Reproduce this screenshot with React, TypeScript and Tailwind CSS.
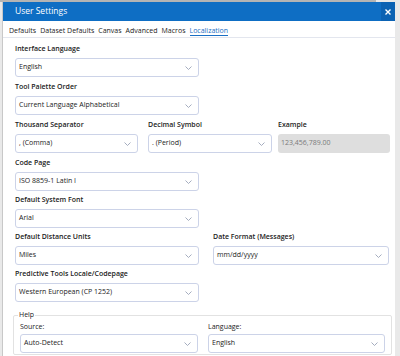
import React from "react";

const font = { fontFamily: '"Open Sans", "Noto Sans", Arial, sans-serif' };

const Chevron = () => (
	<svg width="7" height="4" viewBox="0 0 7 4" className="shrink-0">
		<path d="M0.5 0.5 L3.5 3.5 L6.5 0.5" fill="none" stroke="#9ba4b8" strokeWidth="0.9" />
	</svg>
);

const Select = ({ value, className = "" }: { value: string; className?: string }) => (
	<div
		className={`h-[19px] flex items-center justify-between pl-[3px] pr-[6px] border border-[#ccd3e8] rounded-[3px] bg-white text-[7px] text-[#1a1a1a] ${className}`}
	>
		<span>{value}</span>
		<Chevron />
	</div>
);

const Label = ({ text, className = "" }: { text: string; className?: string }) => (
	<div className={`h-[12px] leading-[12px] text-[7px] font-semibold text-[#222] mb-[3px] ${className}`}>{text}</div>
);

const tabs = ["Defaults", "Dataset Defaults", "Canvas", "Advanced", "Macros", "Localization"];

const App = () => {
	return (
		<div className="w-[400px] h-[356px] overflow-hidden bg-[#e9e9e9] flex flex-col" style={font}>
			<div className="h-[2px] shrink-0 bg-[#b4b4b4] mr-[24px]" />
			<div className="flex-1 flex flex-col ml-[2px] mr-[5px] bg-white border-l border-[#c8c8c8] overflow-hidden">
				<div className="h-[19px] shrink-0 bg-[#0e6ec4] flex items-center justify-between pl-[12px]">
					<span className="text-[8.5px] text-white">User Settings</span>
					<div className="w-[14px] h-full bg-[#0b62b3] flex items-center justify-center">
						<svg width="6" height="6" viewBox="0 0 6 6">
							<path d="M0.5 0.5 L5.5 5.5 M5.5 0.5 L0.5 5.5" stroke="white" strokeWidth="1.4" />
						</svg>
					</div>
				</div>
				<div className="h-[17px] shrink-0 flex items-end gap-[4px] pl-[6px] pb-[1px] border-b border-[#e3e6ee]">
					{tabs.map((t) => (
						<div
							key={t}
							className={`text-[7px] leading-[8px] border-b-[1.5px] ${
								t === "Localization" ? "text-[#1a6fc4] border-[#1a6fc4]" : "text-[#1a1a1a] border-transparent"
							}`}
						>
							{t}
						</div>
					))}
				</div>
				<div className="flex flex-col pl-[12px] pr-[4px] pt-[5px]">
					<div className="w-[184px]">
						<Label text="Interface Language" />
						<Select value="English" />
					</div>
					<div className="w-[184px] mt-[4px]">
						<Label text="Tool Palette Order" />
						<Select value="Current Language Alphabetical" />
					</div>
					<div className="flex mt-[4px]">
						<div className="w-[123px]">
							<Label text="Thousand Separator" />
							<Select value=", (Comma)" />
						</div>
						<div className="w-[124px] ml-[10px]">
							<Label text="Decimal Symbol" />
							<Select value=". (Period)" />
						</div>
						<div className="w-[112px] ml-[6px]">
							<Label text="Example" />
							<div className="h-[19px] flex items-center pl-[3px] rounded-[3px] bg-[#dedede] text-[7px] text-[#7a7a7a]">
								123,456,789.00
							</div>
						</div>
					</div>
					<div className="w-[184px] mt-[4px]">
						<Label text="Code Page" />
						<Select value="ISO 8859-1 Latin I" />
					</div>
					<div className="w-[184px] mt-[3px]">
						<Label text="Default System Font" />
						<Select value="Arial" />
					</div>
					<div className="flex mt-[3px]">
						<div className="w-[184px]">
							<Label text="Default Distance Units" />
							<Select value="Miles" />
						</div>
						<div className="w-[176px] ml-[14px]">
							<Label text="Date Format (Messages)" />
							<Select value="mm/dd/yyyy" />
						</div>
					</div>
					<div className="w-[184px] mt-[3px]">
						<Label text="Predictive Tools Locale/Codepage" />
						<Select value="Western European (CP 1252)" />
					</div>
					<div className="relative mt-[13px] ml-[-2px] w-[379px] h-[40px] border border-[#e2e2e2] rounded-[2px] flex px-[6px] pt-[6px]">
						<span className="absolute left-[4px] top-[-6px] bg-white px-[1px] text-[7px] leading-[10px] text-[#222]">
							Help
						</span>
						<div className="w-[179px]">
							<div className="h-[10px] leading-[10px] text-[7px] text-[#222] mb-[2px]">Source:</div>
							<Select value="Auto-Detect" />
						</div>
						<div className="w-[178px] ml-[10px]">
							<div className="h-[10px] leading-[10px] text-[7px] text-[#222] mb-[2px]">Language:</div>
							<Select value="English" />
						</div>
					</div>
				</div>
			</div>
		</div>
	);
};

export default App;
